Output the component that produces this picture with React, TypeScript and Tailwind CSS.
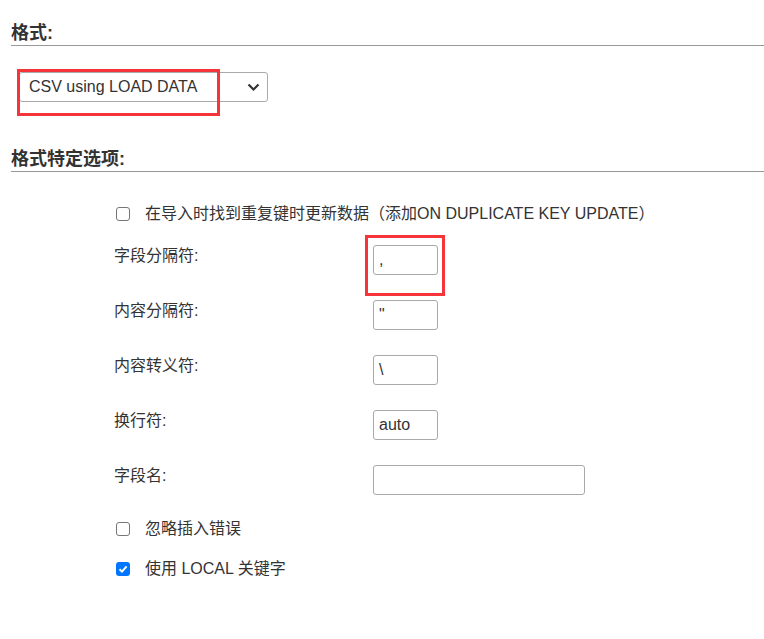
import React from 'react'

const font = { fontFamily: '"Liberation Sans", "Noto Sans CJK SC", sans-serif' }

function Box({ checked }: { checked?: boolean }) {
  if (checked) {
    return (
      <span className="flex h-[14px] w-[14px] shrink-0 items-center justify-center rounded-[3px] bg-[#0075ff]">
        <svg width="10" height="10" viewBox="0 0 10 10">
          <path d="M1.5 5.2 L4 7.6 L8.6 2.4" fill="none" stroke="white" strokeWidth="2" />
        </svg>
      </span>
    )
  }
  return <span className="h-[14px] w-[14px] shrink-0 rounded-[3px] border border-[#767676] bg-white" />
}

function Row({ label, value, wide }: { label: string; value: string; wide?: boolean }) {
  return (
    <div className="flex h-[55px] items-start">
      <div className="w-[259px] leading-[21px]">{label}</div>
      <div
        className={
          (wide ? 'w-[212px] ' : 'w-[65px] ') +
          'flex h-[30px] items-center rounded-[3px] border border-[#a9a9a9] bg-white pl-[5px] text-[16px]'
        }
      >
        {value}
      </div>
    </div>
  )
}

export default function App() {
  return (
    <div className="relative h-[639px] w-full bg-white text-[16px] text-[#333]" style={font}>
      <div className="pl-[11px]">
        <h2 className="border-b border-[#999] pb-[1px] pt-[22px] text-[18px] font-bold leading-[22px]">格式:</h2>

        <div className="ml-[8px] mt-[26px] flex h-[30px] w-[249px] items-center justify-between rounded-[3px] border border-[#aaa] bg-white pl-[9px] pr-[7px]">
          <span>CSV using LOAD DATA</span>
          <svg width="13" height="9" viewBox="0 0 13 9">
            <path d="M1.5 1.5 L6.5 6.5 L11.5 1.5" fill="none" stroke="#333" strokeWidth="2.2" />
          </svg>
        </div>

        <h2 className="mt-[46px] border-b border-[#999] pb-[1px] text-[18px] font-bold leading-[22px]">格式特定选项:</h2>

        <div className="pl-[103px]">
          <div className="mt-[31px] flex items-center gap-[15px] pl-[2px] leading-[21px]">
            <Box />
            <span>在导入时找到重复键时更新数据（添加ON DUPLICATE KEY UPDATE）</span>
          </div>

          <div className="mt-[21px]">
            <Row label="字段分隔符:" value="," />
            <Row label="内容分隔符:" value={'"'} />
            <Row label="内容转义符:" value="\" />
            <Row label="换行符:" value="auto" />
            <Row label="字段名:" value="" wide />
          </div>

          <div className="-mt-[2px] flex items-center gap-[15px] pl-[2px] leading-[21px]">
            <Box />
            <span>忽略插入错误</span>
          </div>
          <div className="mt-[19px] flex items-center gap-[15px] pl-[2px] leading-[21px]">
            <Box checked />
            <span>使用 LOCAL 关键字</span>
          </div>
        </div>
      </div>

      <div className="absolute left-[17px] top-[69px] h-[47px] w-[203px] border-[3px] border-[#f5353a]" />
      <div className="absolute left-[365px] top-[235px] h-[61px] w-[80px] border-[3px] border-[#f5353a]" />
    </div>
  )
}
